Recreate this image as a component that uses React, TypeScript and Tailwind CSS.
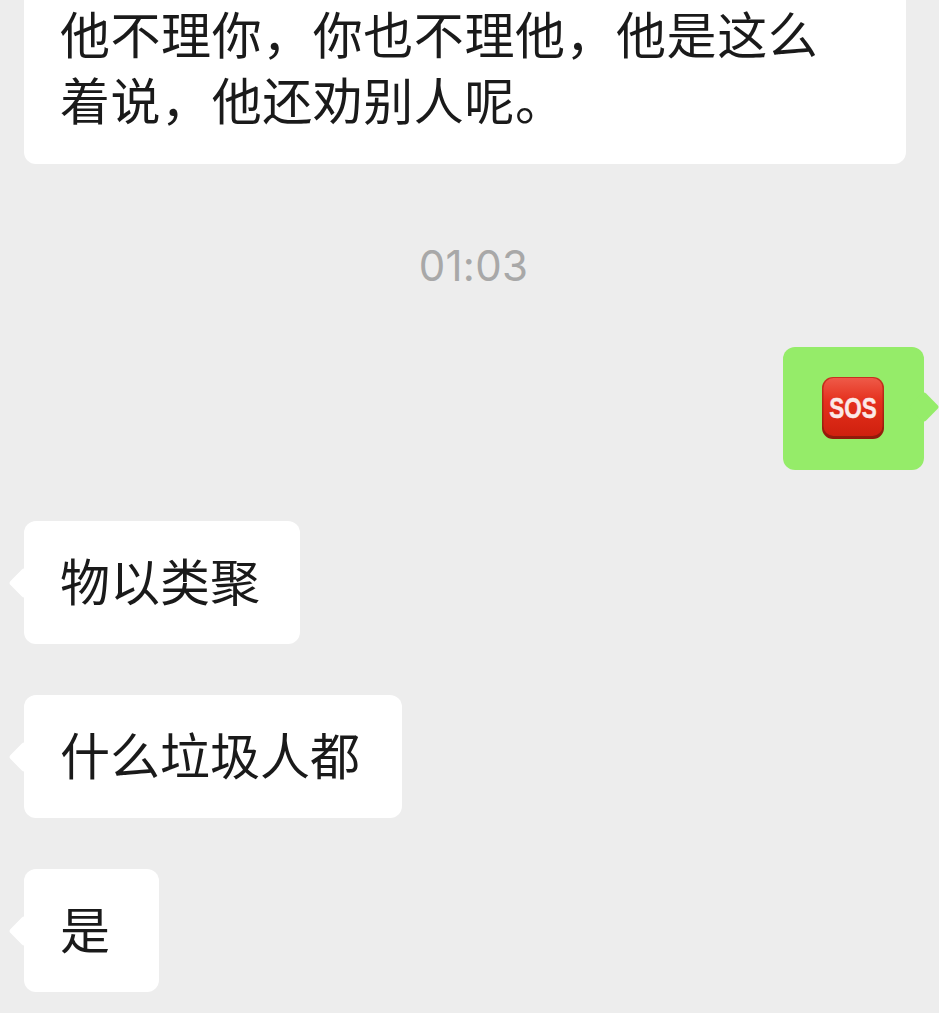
const font = "font-['PingFang_SC','Noto_Sans_CJK_SC',sans-serif]";

// Bubble pointer: a rotated square straddling the bubble's edge
function Tail({ side }: { side: "left" | "right" }) {
  return side === "left" ? (
    <span className="absolute left-[-11px] top-1/2 -translate-y-1/2 w-[22px] h-[22px] rotate-45 rounded-[3px] bg-white" />
  ) : (
    <span className="absolute right-[-11px] top-[49px] w-[22px] h-[22px] rotate-45 rounded-[3px] bg-[#95ec69]" />
  );
}

function SosEmoji() {
  return (
    <svg width="62" height="62" viewBox="0 0 62 62" className="block">
      <defs>
        <linearGradient id="sosEdge" x1="0" y1="0" x2="0" y2="1">
          <stop offset="0" stopColor="#c9301f" />
          <stop offset="1" stopColor="#8f1a0a" />
        </linearGradient>
        <linearGradient id="sosFill" x1="0" y1="0" x2="0" y2="1">
          <stop offset="0" stopColor="#ee5a48" />
          <stop offset="0.4" stopColor="#e5301d" />
          <stop offset="1" stopColor="#cf200e" />
        </linearGradient>
      </defs>
      <rect x="0" y="0" width="62" height="62" rx="11" fill="url(#sosEdge)" />
      <rect x="1.5" y="1" width="59" height="58" rx="10" fill="url(#sosFill)" />
      <text
        transform="translate(31 41) scale(0.75 1)"
        textAnchor="middle"
        fontFamily="'Liberation Sans', sans-serif"
        fontWeight="700"
        fontSize="30"
        stroke="#fbe9e7"
        strokeWidth="0.5"
        fill="#fbe9e7"
      >
        SOS
      </text>
    </svg>
  );
}

function Incoming({ text, width }: { text: string; width: string }) {
  return (
    <div className={`relative bg-white rounded-[12px] h-[123px] flex items-center pl-[36px] pb-[8px] text-[50px] leading-none text-[#1a1a1a] ${width}`}>
      <Tail side="left" />
      <span className="relative">{text}</span>
    </div>
  );
}

export default function App() {
  return (
    <div className={`w-[939px] h-[1013px] overflow-hidden bg-[#ededed] flex flex-col ${font}`}>
      <div className="ml-[24px] w-[882px] h-[164px] bg-white rounded-b-[12px] pl-[36px] text-[50px] text-[#1a1a1a] tracking-[0.55px] whitespace-nowrap">
        <div className="leading-[64px]">他不理你，你也不理他，他是这么</div>
        <div className="mt-[1px] leading-[66px]">着说，他还劝别人呢。</div>
      </div>
      <div className="mt-[76px] h-[52px] flex items-center justify-center pl-[8px] text-[42px] leading-none tracking-[0.3px] text-[#a8a8a8] font-['Inter',sans-serif]">01:03</div>
      <div className="mt-[55px] flex justify-end pr-[15px]">
        <div className="relative w-[141px] h-[123px] bg-[#95ec69] rounded-[12px] flex items-center justify-center pr-[2px] pb-[2px]">
          <Tail side="right" />
          <SosEmoji />
        </div>
      </div>
      <div className="mt-[51px] ml-[24px] flex flex-col gap-[51px]">
        <Incoming text="物以类聚" width="w-[276px]" />
        <Incoming text="什么垃圾人都" width="w-[378px]" />
        <Incoming text="是" width="w-[135px]" />
      </div>
    </div>
  );
}
